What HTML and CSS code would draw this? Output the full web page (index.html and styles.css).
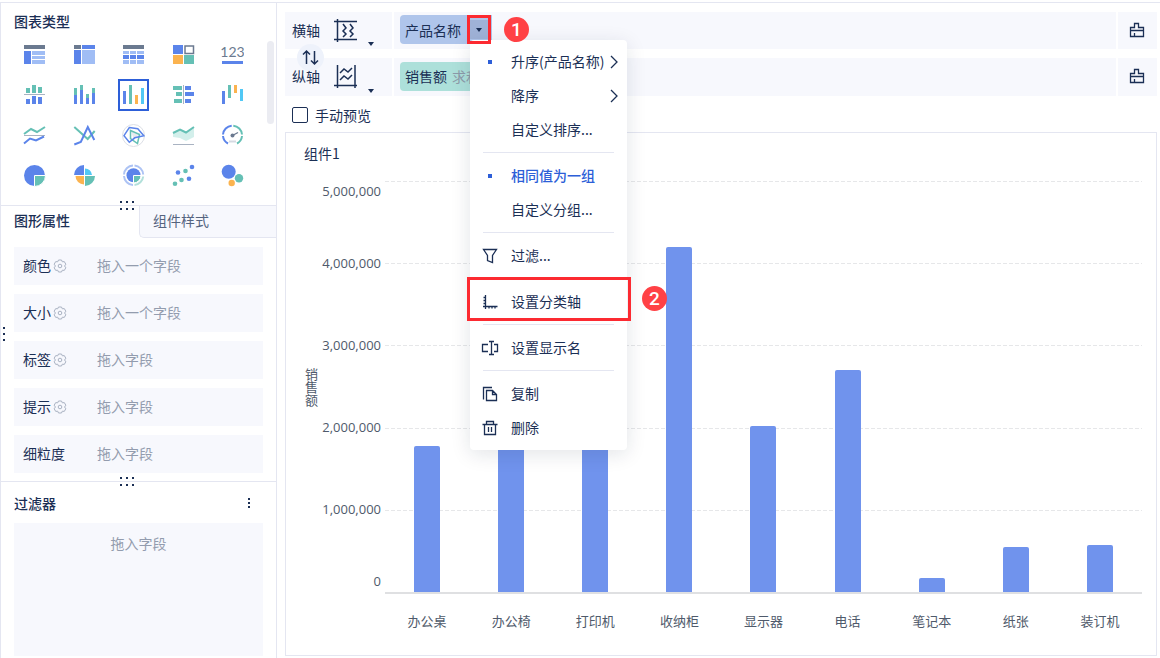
FILE: index.html
```html
<!DOCTYPE html>
<html lang="zh-CN">
<head>
  <meta charset="UTF-8" />
  <title>组件1</title>
  <meta name="viewport" content="width=device-width, initial-scale=1.0"/>
  <link rel="stylesheet" href="styles.css">
</head>
<body>
  <div class="app">
    <aside class="sidebar">
      <!-- chart types -->
      <section class="types">
        <h2 class="title">图表类型</h2>
        <div class="type-grid">
          <button class="type" aria-label="分组表"><svg width="23" height="24"><path fill="#6b7a90" d="M1 2h21v4H1z"/><path fill="#5b84ea" d="M1 8h7v13H1z"/><path fill="#a0bdf5" d="M9 8h13v4H9zM9 13h13v3H9zM9 17h13v4H9z"/></svg></button>
          <button class="type" aria-label="交叉表"><svg width="23" height="24"><path fill="#6b7a90" d="M1 2h7v4H1z"/><path fill="#5b84ea" d="M9 2h13v4H9zM1 7h7v14H1z"/><path fill="#a0bdf5" d="M9 7h13v14H9z"/></svg></button>
          <button class="type" aria-label="明细表"><svg width="23" height="24"><path fill="#6b7a90" d="M1 2h21v4H1z"/><path fill="#a0bdf5" d="M1 8h6v3H1zM8 8h6v3H8zM15 8h7v3h-7zM1 17h6v4H1zM8 17h6v4H8zM15 17h7v4h-7z"/><path fill="#5b84ea" d="M1 12h6v4H1zM8 12h6v4H8zM15 12h7v4h-7z"/></svg></button>
          <button class="type" aria-label="颜色表格"><svg width="23" height="24"><path fill="#5b84ea" d="M1 2h10v9H1z"/><path fill="none" stroke="#6b7a90" stroke-width="1.5" d="M13 3h8.5v7.5H13z"/><path fill="#fbb34f" d="M1 12h10v9H1z"/><path fill="#65c0b5" d="M12 12h10v9H12z"/></svg></button>
          <button class="type" aria-label="指标卡"><svg width="23" height="24"><text class="type-num" x="11.5" y="14" text-anchor="middle">123</text><path fill="#5b84ea" d="M1 18h21v3H1z"/></svg></button>

          <button class="type" aria-label="对比柱状图"><svg width="23" height="24"><path fill="#65c0b5" d="M3 5h4v5H3zM9 2h4v8H9zM15 4h4v6h-4z"/><path fill="#a9b3c2" d="M1 11h21v1H1z"/><path fill="#5b84ea" d="M3 16h4v5H3zM9 13h4v8H9zM15 14h4v7h-4z"/></svg></button>
          <button class="type" aria-label="堆积柱状图"><svg width="23" height="24"><path fill="#65c0b5" d="M1 5h3v7H1zM7 2h3v5H7zM13 11h3v4h-3zM19 5h3v5h-3z"/><path fill="#5b84ea" d="M1 12h3v9H1zM7 7h3v14H7zM13 15h3v6h-3zM19 10h3v11h-3z"/></svg></button>
          <button class="type active" aria-label="多系列柱形图"><svg width="23" height="24"><path fill="#5b84ea" d="M1 8h3v13H1z"/><path fill="#65c0b5" d="M7 2h3v19H7z"/><path fill="#fbb34f" d="M13 12h3v9h-3z"/><path fill="#51c8f5" d="M19 5h3v16h-3z"/></svg></button>
          <button class="type" aria-label="对比条形图"><svg width="23" height="24"><path fill="#65c0b5" d="M1 3h9v4H1zM4 9h6v4H4zM2 16h8v4H2z"/><path fill="#a9b3c2" d="M11 2h1v19h-1z"/><path fill="#5b84ea" d="M13 3h6v4h-6zM13 9h9v4h-9zM13 16h6v4h-6z"/></svg></button>
          <button class="type" aria-label="瀑布图"><svg width="23" height="24"><path fill="#5b84ea" d="M1 8h3v13H1z"/><path fill="#65c0b5" d="M7 2h3v13H7z"/><path fill="#fbb34f" d="M13 2h3v8h-3z"/><path fill="#51c8f5" d="M19 6h3v12h-3z"/></svg></button>

          <button class="type" aria-label="多系列折线图"><svg width="23" height="24" fill="none" stroke-width="2"><path stroke="#65c0b5" d="M1 11l7-5 6 3 8-5"/><path stroke="#a9b3c2" stroke-width="1" d="M1 12.500h21"/><path stroke="#5b84ea" d="M1 20.500l6-5 6 2 8-4"/></svg></button>
          <button class="type" aria-label="范围折线图"><svg width="23" height="24" fill="none" stroke-width="2"><path stroke="#65c0b5" d="M1.300 4l13.400 12 7-8"/><path stroke="#5b84ea" d="M1.300 21.500l6.500-2.500 7-15 6.500 13"/></svg></button>
          <button class="type" aria-label="雷达图"><svg width="23" height="24" fill="none"><circle cx="11.500" cy="12.500" r="11" stroke="#dcdfe6"/><path fill="#e8ebf0" d="M9 8l7 4-4 5z"/><path stroke="#65c0b5" stroke-width="1.500" d="M8.500 7.500l9 4-2 9-7-5z"/><path stroke="#5b84ea" stroke-width="1.500" d="M7.300 4.500l8.500 1.300 6 7-9 2-5.500 4.500L2 12.700z"/></svg></button>
          <button class="type" aria-label="面积图"><svg width="23" height="24" fill="none"><path fill="#d3efeb" d="M1 10l7-4 6 3 8-5v10l-8 4-6-3-7-1z"/><path stroke="#65c0b5" stroke-width="2" d="M1 10l7-3.500 6 3L22 4"/><path stroke="#a9b3c2" d="M1 21.500h21"/></svg></button>
          <button class="type" aria-label="仪表盘"><svg width="23" height="24" fill="none" stroke-width="2"><path stroke="#5b84ea" d="M7 20.500a9.500 9.500 0 0 1-5-7.500M2 11.500a9.500 9.500 0 0 1 8.700-8.800"/><path stroke="#65c0b5" d="M12.300 2.700A9.500 9.500 0 0 1 21 11.500M21 13a9.500 9.500 0 0 1-5 7.500"/><path stroke="#d5dae2" d="M8 18.500h7"/><circle cx="11.500" cy="12.500" r="2" fill="#6b7a90"/><path stroke="#6b7a90" stroke-width="1.300" d="M11.500 12.500l5.500-3"/></svg></button>

          <button class="type" aria-label="饼图"><svg width="23" height="24"><circle cx="11.500" cy="12.500" r="10.500" fill="#5b84ea"/><path fill="#65c0b5" stroke="#fff" d="M11.500 12.500H22.500A11 11 0 0 1 11.500 23.500z"/></svg></button>
          <button class="type" aria-label="玫瑰图"><svg width="23" height="24"><path fill="#5b84ea" d="M11 12H1A10.200 10.200 0 0 1 11 2z"/><path fill="#51c8f5" d="M12 12V5.500a7 7 0 0 1 7 6.500z"/><path fill="#fbb34f" d="M11 13v8.500A8.500 8.500 0 0 1 2.500 13z"/><path fill="#65c0b5" d="M12 13h10a10.200 10.200 0 0 1-10 10z"/></svg></button>
          <button class="type" aria-label="多层饼图"><svg width="23" height="24" fill="none"><path stroke="#adc3f4" stroke-width="2" d="M11 22a9.500 9.500 0 0 1-9-9M2 11.500a9.500 9.500 0 0 1 9-9M12.500 2.500a9.500 9.500 0 0 1 8.700 9"/><path stroke="#b2e0da" stroke-width="2" d="M21.200 13.500a9.500 9.500 0 0 1-8.700 8.500"/><circle cx="11.500" cy="12.300" r="7" fill="#5b84ea"/><path fill="#65c0b5" stroke="#fff" d="M11.500 12.500H19A7.500 7.500 0 0 1 11.500 20z"/></svg></button>
          <button class="type" aria-label="散点图"><svg width="23" height="24"><g fill="#5b84ea"><circle cx="6" cy="9.500" r="2.300"/><circle cx="20" cy="4" r="2.300"/><circle cx="17" cy="15.700" r="2.300"/></g><g fill="#65c0b5"><circle cx="13.500" cy="8" r="2.300"/><circle cx="3" cy="20.700" r="2.300"/><circle cx="9.500" cy="17" r="2.300"/></g></svg></button>
          <button class="type" aria-label="聚合气泡图"><svg width="23" height="24"><circle cx="7.700" cy="8.700" r="7" fill="#5b84ea"/><circle cx="18" cy="15.300" r="4.200" fill="#65c0b5"/><circle cx="10.700" cy="20" r="3.200" fill="#fbb34f"/></svg></button>
        </div>
        <span class="scrollbar"></span>
        <span class="grip"></span>
      </section>

      <!-- graphic attributes -->
      <section class="attrs">
        <div class="tabs">
          <button class="tab active">图形属性</button>
          <button class="tab">组件样式</button>
        </div>
        <div class="attr-list">
          <div class="attr">
            <span class="attr-name">颜色<svg class="gear" width="14" height="14"><use href="#gear"/></svg></span>
            <span class="hint">拖入一个字段</span>
          </div>
          <div class="attr">
            <span class="attr-name">大小<svg class="gear" width="14" height="14"><use href="#gear"/></svg></span>
            <span class="hint">拖入一个字段</span>
          </div>
          <div class="attr">
            <span class="attr-name">标签<svg class="gear" width="14" height="14"><use href="#gear"/></svg></span>
            <span class="hint">拖入字段</span>
          </div>
          <div class="attr">
            <span class="attr-name">提示<svg class="gear" width="14" height="14"><use href="#gear"/></svg></span>
            <span class="hint">拖入字段</span>
          </div>
          <div class="attr">
            <span class="attr-name">细粒度</span>
            <span class="hint">拖入字段</span>
          </div>
        </div>
        <span class="grip"></span>
      </section>

      <!-- filters -->
      <section class="filters">
        <div class="filters-head">
          <h2 class="title">过滤器</h2>
          <button class="more" aria-label="更多"><svg width="4" height="12" fill="#1b2f55"><path d="M1 1h2v2H1zM1 5h2v2H1zM1 9h2v2H1z"/></svg></button>
        </div>
        <div class="filter-drop hint">拖入字段</div>
      </section>
      <span class="side-grip"></span>
    </aside>

    <main class="main">
      <div class="shelves">
        <div class="shelf">
          <div class="shelf-name">横轴
            <svg class="axis-icon" width="26" height="26" fill="none" stroke="#1b2f55" stroke-width="1.500"><path d="M5.500 2v23M2 4.500h23M2 22.500h23M11 7l3 4-3 3 3 3-3 3M18 7l3 4-3 3 3 3-3 3"/></svg>
            <i class="caret"></i>
          </div>
          <div class="shelf-fields">
            <div class="pill dim">产品名称
              <button class="pill-btn" aria-label="字段设置"><i class="caret"></i></button>
            </div>
          </div>
          <button class="shelf-clear" aria-label="清空"><svg width="16" height="16"><use href="#brush"/></svg></button>
        </div>
        <div class="shelf">
          <div class="shelf-name">纵轴
            <svg class="axis-icon" width="26" height="26" fill="none" stroke="#1b2f55" stroke-width="1.500"><path d="M5.500 2v23M23 2v23M2 22.500h23M8 10l4-4 4 3 4-4M8 17l4-4 4 3 4-4"/></svg>
            <i class="caret"></i>
          </div>
          <div class="shelf-fields">
            <div class="pill measure">销售额 <span class="agg">求和</span></div>
          </div>
          <button class="shelf-clear" aria-label="清空"><svg width="16" height="16"><use href="#brush"/></svg></button>
        </div>
        <button class="swap" aria-label="交换横纵轴"><svg width="19" height="19" fill="none" stroke="#1b2f55" stroke-width="1.500"><path d="M5.500 16V3M2 6.500L5.500 3 9 6.500M13.500 3v13M10 12.500l3.500 3.500 3.500-3.500"/></svg></button>
      </div>

      <label class="preview"><input type="checkbox">手动预览</label>

      <section class="chart">
        <h3 class="chart-title">组件1</h3>
        <div class="chart-body">
          <div class="y-title">销售额</div>
          <div class="y-axis">
            <span>5,000,000</span>
            <span>4,000,000</span>
            <span>3,000,000</span>
            <span>2,000,000</span>
            <span>1,000,000</span>
            <span>0</span>
          </div>
          <div class="plot">
            <div class="bar" style="height:35.6%"></div>
            <div class="bar" style="height:52%"></div>
            <div class="bar" style="height:64%"></div>
            <div class="bar" style="height:84%"></div>
            <div class="bar" style="height:40.5%"></div>
            <div class="bar" style="height:53.9%"></div>
            <div class="bar" style="height:3.3%"></div>
            <div class="bar" style="height:11%"></div>
            <div class="bar" style="height:11.5%"></div>
          </div>
          <div class="x-axis">
            <span>办公桌</span>
            <span>办公椅</span>
            <span>打印机</span>
            <span>收纳柜</span>
            <span>显示器</span>
            <span>电话</span>
            <span>笔记本</span>
            <span>纸张</span>
            <span>装订机</span>
          </div>
        </div>
      </section>

      <!-- field drop-down menu -->
      <div class="menu" role="menu">
        <button class="item" role="menuitem"><span class="ico"><i class="dot"></i></span>升序(产品名称)<svg class="arrow" width="8" height="14"><path d="M1 1l6 6-6 6"/></svg></button>
        <button class="item" role="menuitem"><span class="ico"></span>降序<svg class="arrow" width="8" height="14"><path d="M1 1l6 6-6 6"/></svg></button>
        <button class="item" role="menuitem"><span class="ico"></span>自定义排序...</button>
        <hr class="sep">
        <button class="item on" role="menuitem"><span class="ico"><i class="dot"></i></span>相同值为一组</button>
        <button class="item" role="menuitem"><span class="ico"></span>自定义分组...</button>
        <hr class="sep">
        <button class="item" role="menuitem"><span class="ico"><svg width="16" height="16"><path d="M1.500 1.500h13L10.500 7.500v7l-5-2v-5z"/></svg></span>过滤...</button>
        <hr class="sep">
        <button class="item" role="menuitem"><span class="ico"><svg width="16" height="16"><path d="M3.500 1v14M1 12.500h14.500M1.500 3.500h2M1.500 6.500h2M1.500 9.500h2M7 12.500v2M10 12.500v2M13 12.500v2"/></svg></span>设置分类轴</button>
        <hr class="sep">
        <button class="item" role="menuitem"><span class="ico"><svg width="18" height="16"><path d="M7 4.500H1.500v7H7M13 4.500h3.500v7H13M10.500 1v14M8 1.500h5M8 14.500h5"/></svg></span>设置显示名</button>
        <hr class="sep">
        <button class="item" role="menuitem"><span class="ico"><svg width="16" height="16"><path d="M1.500 13.500v-12H10M4.500 4.500h6l4 4v6h-10zM10.500 4.500v4h4"/></svg></span>复制</button>
        <button class="item" role="menuitem"><span class="ico"><svg width="16" height="16"><path d="M.5 4.500h15M4.500 4V1.500h7V4M2.500 4.500v10h11v-10M6.500 7v5M9.500 7v5"/></svg></span>删除</button>
      </div>

      <!-- step marks -->
      <span class="frame frame-1"></span>
      <span class="step step-1">1</span>
      <span class="frame frame-2"></span>
      <span class="step step-2">2</span>
    </main>
  </div>

  <svg class="defs" width="0" height="0">
    <symbol id="gear" viewBox="0 0 14 14">
      <path fill="none" stroke="#a9b2c2" stroke-linejoin="round" d="M5.500 1h3l.8 1.800 2-.2 1.500 2.600L11.600 7l1.200 1.800-1.500 2.600-2-.2L8.500 13h-3l-.8-1.800-2 .2-1.500-2.600L2.400 7 1.200 5.200l1.500-2.600 2 .2z"/>
      <circle cx="7" cy="7" r="1.800" fill="none" stroke="#a9b2c2"/>
    </symbol>
    <symbol id="brush" viewBox="0 0 16 16">
      <path fill="none" stroke="#1b2f55" stroke-width="1.300" d="M1.500 14.500v-9H5.500V1.500h4v4h5v9zM1.500 8.500h13M5.500 11v3.500"/>
    </symbol>
  </svg>
</body>
</html>
```
FILE: styles.css
```css
* {
  box-sizing: border-box;
}
body {
  margin: 0;
  font-family: "Noto Sans CJK SC", sans-serif;
  font-size: 14px;
  line-height: 20px;
  color: #1b2f55;
  background: #fff;
}
button {
  padding: 0;
  border: none;
  background: none;
  font: inherit;
  color: inherit;
  cursor: pointer;
}
svg {
  display: block;
}
.defs {
  position: absolute;
}
.app {
  display: flex;
  min-height: calc(100vh - 2px);
  margin-top: 2px;
  border-top: 1px solid #e4e6f1;
}

/* sidebar */
.sidebar {
  position: relative;
  display: flex;
  flex-direction: column;
  flex: none;
  width: 277px;
  border-left: 1px solid #e4e6f1;
  border-right: 1px solid #e4e6f1;
}
.title {
  margin: 0;
  font-size: 14px;
  font-weight: 500;
}
.types {
  position: relative;
  padding: 8px 28px 14px 13px;
  border-bottom: 1px solid #e4e6f1;
}
.type-grid {
  display: grid;
  grid-template-columns: repeat(5, 31px);
  justify-content: space-between;
  row-gap: 8px;
  margin-top: 8px;
  margin-left: 5px;
}
.type {
  display: flex;
  align-items: center;
  justify-content: center;
  height: 32px;
}
.type.active {
  outline: 2px solid #2d5fd8;
  outline-offset: -2px;
}
.type-num {
  font-family: "Liberation Sans Narrow", Lato, sans-serif;
  font-size: 14px;
  fill: #6b7a90;
}
.scrollbar {
  position: absolute;
  top: 38px;
  right: 2px;
  width: 7px;
  height: 83px;
  border-radius: 4px;
  background: #ebecf2;
}
.grip {
  position: absolute;
  bottom: -5px;
  left: 119px;
  z-index: 1;
  width: 15px;
  height: 9px;
  background:
    linear-gradient(#1b2f55, #1b2f55) 0 0 / 2px 2px,
    linear-gradient(#1b2f55, #1b2f55) 6px 0 / 2px 2px,
    linear-gradient(#1b2f55, #1b2f55) 12px 0 / 2px 2px,
    linear-gradient(#1b2f55, #1b2f55) 0 7px / 2px 2px,
    linear-gradient(#1b2f55, #1b2f55) 6px 7px / 2px 2px,
    linear-gradient(#1b2f55, #1b2f55) 12px 7px / 2px 2px;
  background-repeat: no-repeat;
}
.side-grip {
  position: absolute;
  top: 50%;
  left: 2px;
  width: 2px;
  height: 14px;
  margin-top: -4px;
  background: repeating-linear-gradient(#1b2f55 0 2px, transparent 2px 6px);
}
.attrs {
  position: relative;
  border-bottom: 1px solid #e4e6f1;
}
.tabs {
  display: flex;
  height: 32px;
}
.tab {
  flex: 1;
  padding: 0 0 3px 13px;
  text-align: left;
  color: #55647f;
  background: #f7f8fd;
  border-left: 1px solid #e4e6f1;
  border-bottom: 1px solid #e4e6f1;
  border-bottom-left-radius: 5px;
}
.tab.active {
  flex: none;
  width: 138px;
  font-weight: 500;
  color: #1b2f55;
  background: none;
  border-color: transparent;
  border-left: none;
}
.attr-list {
  display: flex;
  flex-direction: column;
  gap: 9px;
  padding: 9px 13px 8px;
}
.attr {
  display: flex;
  align-items: center;
  height: 38px;
  padding: 0 0 3px 9px;
  background: #f7f8fd;
}
.attr-name {
  display: flex;
  align-items: center;
  gap: 2px;
  width: 74px;
}
.gear {
  margin-top: 3px;
}
.hint {
  color: #939cae;
}
.filters {
  display: flex;
  flex: 1;
  flex-direction: column;
  padding: 11px 13px 2px;
}
.filters-head {
  display: flex;
  align-items: center;
  justify-content: space-between;
  padding-right: 12px;
}
.filter-drop {
  flex: 1;
  margin-top: 10px;
  padding-top: 10px;
  text-align: center;
  background: #f7f8fd;
}

/* axis shelves */
.main {
  position: relative;
  display: flex;
  flex: 1;
  flex-direction: column;
  padding: 9px 3px 2px 8px;
}
.shelves {
  position: relative;
  display: grid;
  grid-template-rows: 37px 38px;
  gap: 9px;
}
.shelf {
  display: flex;
  gap: 2px;
}
.shelf-name,
.shelf-fields,
.shelf-clear {
  display: flex;
  align-items: center;
  padding-bottom: 2px;
  background: #f7f8fd;
}
.shelf-name {
  gap: 12px;
  width: 107px;
  padding-left: 7px;
}
.shelf-fields {
  flex: 1;
  padding-left: 6px;
}
.shelf-clear {
  justify-content: center;
  width: 39px;
  padding-right: 2px;
}
.caret {
  border: 3px solid transparent;
  border-top: 4px solid #1b2f55;
  border-bottom: none;
}
.shelf-name .caret {
  align-self: flex-end;
  margin: 0 0 1px -2px;
}
.pill {
  display: flex;
  align-items: center;
  gap: 5px;
  height: 29px;
  padding: 0 4px 0 5px;
  border-radius: 4px 0 0 4px;
}
.dim {
  gap: 8px;
  background: #afc5eb;
}
.measure {
  background: #ade0da;
}
.agg {
  color: #8c9aa9;
}
.pill-btn {
  display: flex;
  align-items: center;
  justify-content: center;
  width: 19px;
  height: 19px;
  background: #9fb2d7;
}
.swap {
  position: absolute;
  top: 32px;
  left: 12px;
  display: flex;
  align-items: center;
  justify-content: center;
  width: 27px;
  height: 27px;
  border-radius: 50%;
  background: #eef2fb;
}
.preview {
  display: flex;
  align-items: center;
  gap: 7px;
  height: 36px;
  padding: 2px 0 0 7px;
}
.preview input {
  appearance: none;
  width: 16px;
  height: 16px;
  margin: 0;
  border: 1px solid #1b2f55;
  border-radius: 2px;
}

/* chart */
.chart {
  display: flex;
  flex: 1;
  flex-direction: column;
  padding: 10px 14px 24px 18px;
  border: 1px solid #e4e6f1;
}
.chart-title {
  margin: 0;
  font-size: 14px;
  font-weight: 400;
}
.chart-body {
  display: grid;
  flex: 1;
  grid-template-columns: 14px 59px 1fr;
  grid-template-rows: 1fr 20px;
  gap: 17px 4px;
  margin-top: 18px;
  font-size: 13px;
  color: #4f5a6b;
}
.y-title {
  align-self: center;
  writing-mode: vertical-rl;
  line-height: 14px;
}
.y-axis {
  display: flex;
  flex-direction: column;
  padding-bottom: 3px;
  font-family: "Open Sans", sans-serif;
}
.y-axis span {
  display: flex;
  flex: 2 0 0;
  align-items: center;
  justify-content: flex-end;
}
.y-axis span:first-child {
  flex-grow: 1;
  align-items: flex-start;
}
.y-axis span:last-child {
  flex-grow: 1;
  align-items: flex-end;
}
.plot,
.x-axis {
  display: grid;
  grid-template-columns: repeat(9, 1fr);
  justify-items: center;
}
.plot {
  align-items: end;
  border-bottom: 2px solid #dfe0e2;
  background:
    repeating-linear-gradient(90deg, transparent 0 4px, #fff 4px 6px),
    repeating-linear-gradient(#e6e7e9 0 1px, transparent 1px 20%);
}
.bar {
  width: 26px;
  border-radius: 2px 2px 0 0;
  background: #7093ed;
}
.x-axis {
  grid-column: 3;
}

/* menu */
.menu {
  position: absolute;
  top: 37px;
  left: 193px;
  width: 157px;
  padding: 5px 0;
  border-radius: 4px;
  background: #fff;
  box-shadow: 0 4px 20px rgba(20, 30, 60, 0.12);
}
.item {
  display: flex;
  align-items: center;
  width: 100%;
  height: 34px;
  padding: 0 9px 3px 11px;
}
.item.on {
  font-weight: 500;
  color: #2d5fd8;
}
.ico {
  display: flex;
  justify-content: center;
  width: 18px;
  margin: 3px 12px 0 0;
}
.item svg {
  fill: none;
  stroke: #1b2f55;
  stroke-width: 1.3;
}
.item .arrow {
  margin: 3px 0 0 auto;
}
.dot {
  width: 4px;
  height: 4px;
  background: #2d5fd8;
}
.sep {
  margin: 5px 13px 6px;
  border: none;
  border-top: 1px solid #e4e6f1;
}

/* step marks */
.frame {
  position: absolute;
  left: 190px;
  border: 3px solid #fc2a31;
}
.frame-1 {
  top: 12px;
  width: 24px;
  height: 29px;
}
.frame-2 {
  top: 274px;
  width: 164px;
  height: 44px;
}
.step {
  position: absolute;
  width: 25px;
  height: 25px;
  border-radius: 50%;
  font-family: Roboto, sans-serif;
  font-size: 19px;
  font-weight: 500;
  line-height: 25px;
  text-align: center;
  color: #fff;
  background: #ff4145;
}
.step-1 {
  top: 14px;
  left: 227px;
}
.step-2 {
  top: 283px;
  left: 365px;
}
```
